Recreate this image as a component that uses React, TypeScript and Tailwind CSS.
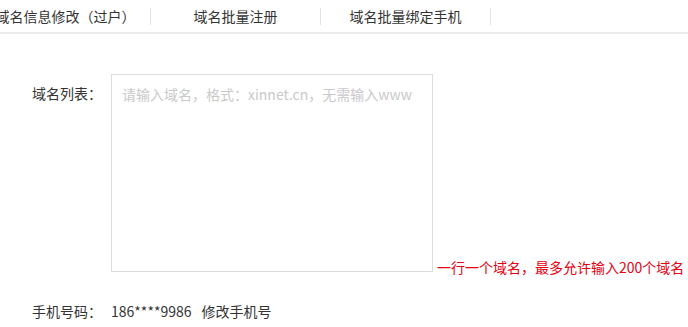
import React from "react";

const tabs = ["域名信息修改（过户）", "域名批量注册", "域名批量绑定手机"];

const App = () => {
  return (
    <div
      lang="zh-CN"
      className="h-[327px] w-[688px] overflow-hidden bg-white font-['Noto_Sans_CJK_SC',sans-serif] text-sm text-[#333] [text-spacing-trim:space-all]"
    >
      {/* Tabs */}
      <div className="h-[34px] border-b-2 border-[#ececec]">
        <div className="-ml-[19px] flex h-[32px] items-center">
          {tabs.map((t) => (
            <div key={t} className="flex w-[170px] shrink-0 items-center">
              <span className="flex-1 whitespace-nowrap text-center leading-5">{t}</span>
              <span className="h-[17px] w-px bg-[#e3e3e3]" />
            </div>
          ))}
        </div>
      </div>

      {/* Domain list */}
      <div className="mt-[40px] flex items-end pl-[32px]">
        <div className="w-[79px] self-start pt-[9px] leading-5">域名列表：</div>
        <textarea
          className="h-[198px] w-[322px] resize-none border border-[#dcdcdc] px-[10px] py-[9px] leading-5 outline-none placeholder:text-[#c9c9c9]"
          placeholder="请输入域名，格式：xinnet.cn，无需输入www"
        />
        <div className="-mb-[5px] ml-[4px] whitespace-nowrap leading-5 text-[#e50012]">
          一行一个域名，最多允许输入200个域名
        </div>
      </div>

      {/* Phone */}
      <div className="mt-[29px] flex pl-[32px] leading-5">
        <div className="w-[79px]">手机号码：</div>
        <span>186****9986</span>
        <span className="ml-[10px]">修改手机号</span>
      </div>
    </div>
  );
};

export default App;
